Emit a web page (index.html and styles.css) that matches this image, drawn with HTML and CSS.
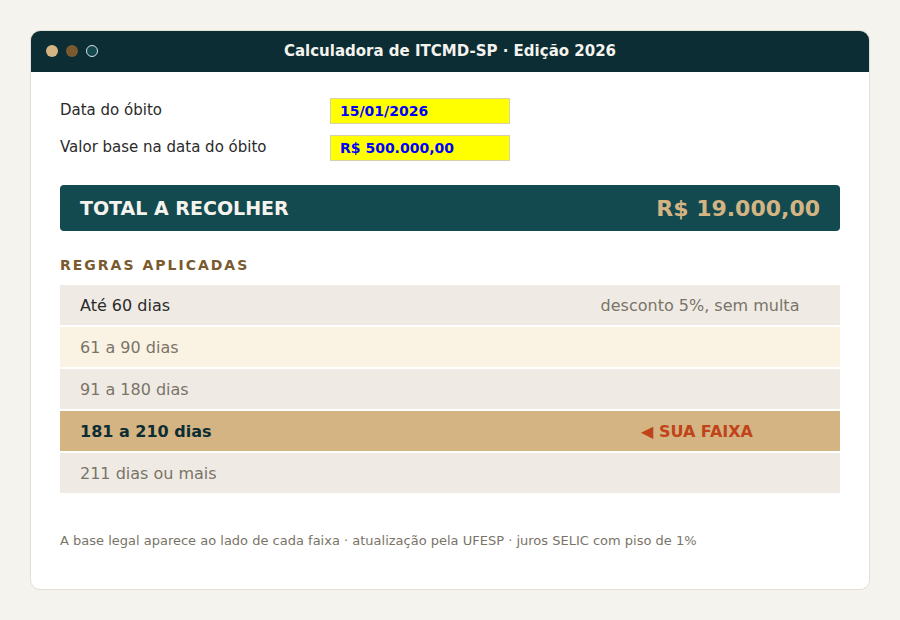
FILE: index.html
```html
<!DOCTYPE html>
<html lang="pt-BR">
<head>
<meta charset="utf-8">
<title>Calculadora de ITCMD-SP</title>
<link rel="stylesheet" href="styles.css">
</head>
<body>
<div class="window">
  <div class="titlebar">
    <div class="dots">
      <span class="dot dot-tan"></span>
      <span class="dot dot-brown"></span>
      <span class="dot dot-ring"></span>
    </div>
    <div class="title">Calculadora de ITCMD-SP · Edição 2026</div>
  </div>
  <div class="content">
    <div class="fields">
      <div class="field">
        <label class="label">Data do óbito</label>
        <div class="input">15/01/2026</div>
      </div>
      <div class="field">
        <label class="label">Valor base na data do óbito</label>
        <div class="input">R$ 500.000,00</div>
      </div>
    </div>
    <div class="total">
      <span class="total-label">TOTAL A RECOLHER</span>
      <span class="total-value">R$ 19.000,00</span>
    </div>
    <div class="section-title">REGRAS APLICADAS</div>
    <div class="rules">
      <div class="rule rule-a rule-first"><span class="rule-name">Até 60 dias</span><span class="rule-note">desconto 5%, sem multa</span></div>
      <div class="rule rule-b"><span class="rule-name">61 a 90 dias</span><span class="rule-note"></span></div>
      <div class="rule rule-a"><span class="rule-name">91 a 180 dias</span><span class="rule-note"></span></div>
      <div class="rule rule-active"><span class="rule-name">181 a 210 dias</span><span class="rule-note rule-badge">◀ SUA FAIXA</span></div>
      <div class="rule rule-a"><span class="rule-name">211 dias ou mais</span><span class="rule-note"></span></div>
    </div>
    <p class="footnote">A base legal aparece ao lado de cada faixa · atualização pela UFESP · juros SELIC com piso de 1%</p>
  </div>
</div>
</body>
</html>
```
FILE: styles.css
```css
* { box-sizing: border-box; }
html, body { margin: 0; padding: 0; }
body {
  background: #f5f3ee;
  font-family: "DejaVu Sans", "Liberation Sans", sans-serif;
  padding: 30px;
  width: 900px;
  height: 620px;
}
.window {
  width: 840px;
  height: 560px;
  background: #ffffff;
  border: 1px solid #e2ded3;
  border-radius: 10px;
  overflow: hidden;
  display: flex;
  flex-direction: column;
}
.titlebar {
  height: 41px;
  background: #0b2d33;
  display: flex;
  align-items: center;
  position: relative;
  padding-left: 15px;
  padding-bottom: 2px;
}
.dots { display: flex; gap: 8px; }
.dot {
  width: 12px; height: 12px; border-radius: 50%; display: block;
}
.dot-tan { background: #d4b483; }
.dot-brown { background: #7a5a2e; }
.dot-ring { background: #14484f; border: 1px solid #d8e4e2; }
.title {
  position: absolute;
  left: 0; right: 0; top: 0; bottom: 2px;
  display: flex; align-items: center; justify-content: center;
  color: #f5f3ee;
  font-weight: bold;
  font-size: 15px;
}
.content {
  padding: 26px 29px 0 29px;
  display: flex;
  flex-direction: column;
}
.fields { display: flex; flex-direction: column; gap: 11px; }
.field { display: flex; align-items: center; }
.label {
  width: 270px;
  font-size: 15px;
  color: #2a2a2a;
  position: relative;
  top: -1px;
}
.input {
  width: 180px;
  height: 26px;
  background: #ffff00;
  border: 1px solid #d6cfae;
  color: #0000ff;
  font-weight: bold;
  font-size: 14px;
  padding-left: 9px;
  display: flex; align-items: center;
}
.total {
  margin-top: 24px;
  height: 46px;
  background: #134a50;
  border-radius: 4px;
  display: flex;
  align-items: center;
  justify-content: space-between;
  padding: 0 20px;
}
.total-label { color: #f5f3ee; font-weight: bold; font-size: 19px; }
.total-value { color: #d4b483; font-weight: bold; font-size: 22px; }
.section-title {
  margin-top: 26px;
  font-size: 14px;
  font-weight: bold;
  letter-spacing: 2px;
  color: #7a5a2e;
}
.rules {
  margin-top: 12px;
  display: flex;
  flex-direction: column;
  gap: 2px;
}
.rule {
  height: 40px;
  display: flex;
  align-items: center;
  padding: 0 20px;
  font-size: 16px;
  color: #7a7468;
}
.rule-name { flex: 1; }
.rule-note { width: 240px; text-align: center; }
.rule-a { background: #efebe4; }
.rule-b { background: #faf3e3; }
.rule-first { color: #2a2a2a; }
.rule-first .rule-note { color: #7a7468; }
.rule-active { background: #d4b483; color: #0b2d33; font-weight: bold; }
.rule-badge { color: #c0441a; padding-right: 6px; }
.footnote {
  margin: 40px 0 0 0;
  font-size: 13px;
  color: #7a7468;
}
```
